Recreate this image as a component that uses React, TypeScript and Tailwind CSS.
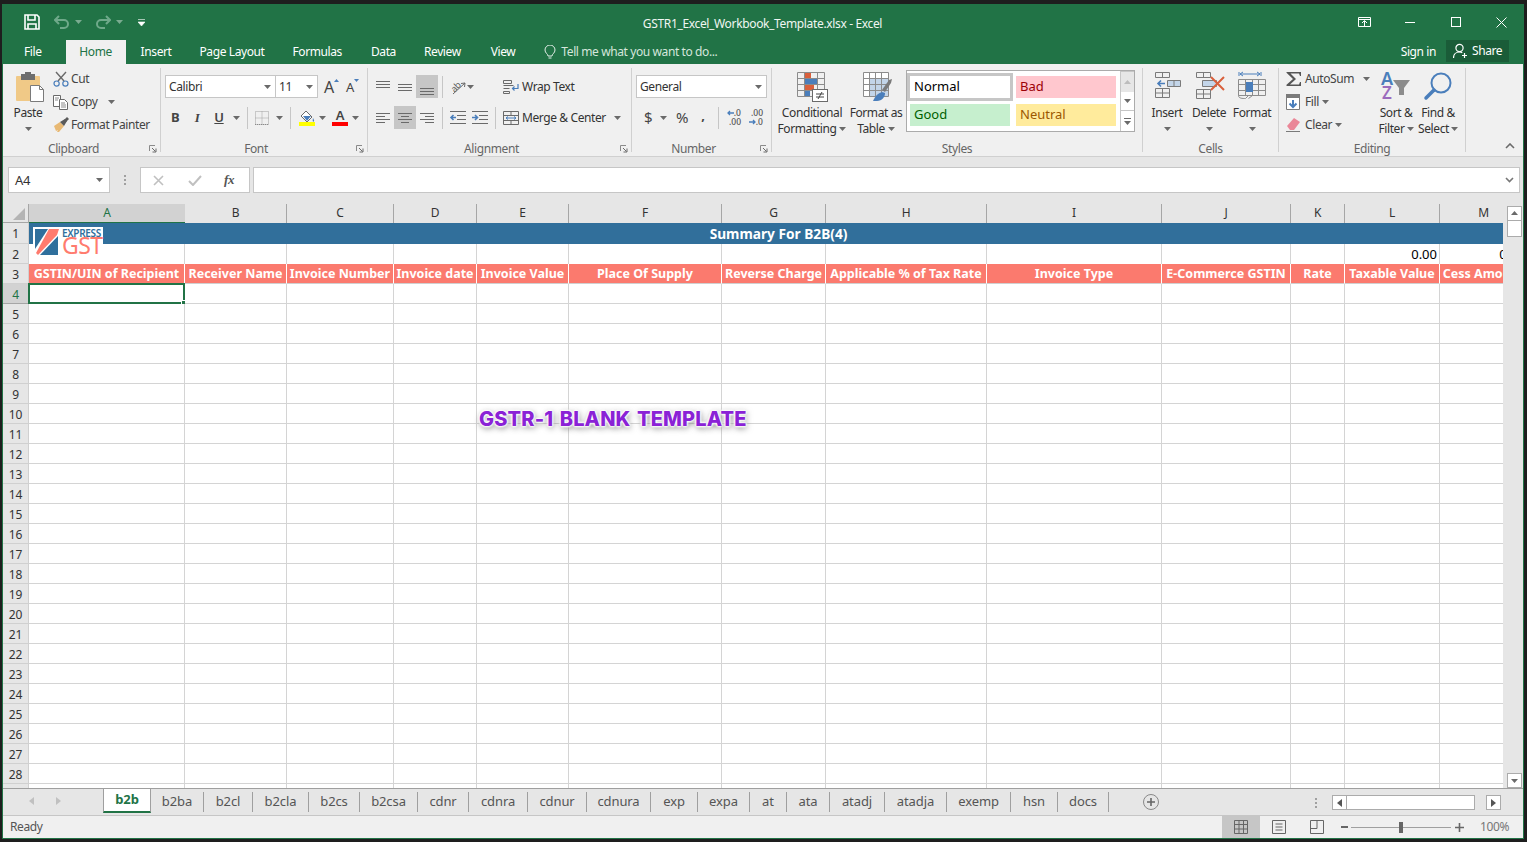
import type { ReactNode } from "react";

const colClass = "grid grid-cols-[156px_102px_107px_83px_92px_153px_104px_161px_175px_129px_54px_95px_88px] w-[1499px] shrink-0";
const cols = ["A", "B", "C", "D", "E", "F", "G", "H", "I", "J", "K", "L", "M"];
const headers = [
  "GSTIN/UIN of Recipient", "Receiver Name", "Invoice Number", "Invoice date", "Invoice Value", "Place Of Supply",
  "Reverse Charge", "Applicable % of Tax Rate", "Invoice Type", "E-Commerce GSTIN", "Rate", "Taxable Value", "Cess Amount",
];
const tabs = [
  { n: "b2ba", w: "w-[53px]" }, { n: "b2cl", w: "w-[49px]" }, { n: "b2cla", w: "w-[56px]" }, { n: "b2cs", w: "w-[51px]" },
  { n: "b2csa", w: "w-[58px]" }, { n: "cdnr", w: "w-[51px]" }, { n: "cdnra", w: "w-[59px]" }, { n: "cdnur", w: "w-[59px]" },
  { n: "cdnura", w: "w-[64px]" }, { n: "exp", w: "w-[47px]" }, { n: "expa", w: "w-[52px]" }, { n: "at", w: "w-[37px]" },
  { n: "ata", w: "w-[43px]" }, { n: "atadj", w: "w-[55px]" }, { n: "atadja", w: "w-[62px]" }, { n: "exemp", w: "w-[64px]" },
  { n: "hsn", w: "w-[47px]" }, { n: "docs", w: "w-[51px]" },
];
const rows = Array.from({ length: 29 }, (_, i) => i + 1);

const BLUE = "#4a7ebb";

function Svg({ w, h, children }: { w: number; h: number; children: ReactNode }) {
  return <svg width={w} height={h} viewBox={`0 0 ${w} ${h}`} className="block shrink-0 overflow-visible">{children}</svg>;
}

function Caret({ color = "#6a6a6a" }: { color?: string }) {
  return <svg width="7" height="4" viewBox="0 0 7 4" className="block shrink-0"><path d="M0 0h7L3.5 4z" fill={color} /></svg>;
}

function Launcher() {
  return (
    <svg width="8" height="8" viewBox="0 0 8 8" className="block shrink-0">
      <path d="M.5 6V.5H6" fill="none" stroke="#8a8a8a" />
      <path d="M3 3l3.5 3.5M7 3.5V7H3.5" fill="none" stroke="#6a6a6a" />
    </svg>
  );
}

function Group({ w, label, launcher, children }: { w: string; label: string; launcher?: boolean; children: ReactNode }) {
  return (
    <div className={`${w} h-[84px] border-r border-[#d0d0d0] flex flex-col shrink-0`}>
      <div className="h-[72px] flex">{children}</div>
      <div className={`h-[12px] flex items-center justify-center relative text-[#666] leading-[16px] pt-[6px] ${launcher ? "pr-[16px]" : ""}`}>
        {label}
        {launcher && <span className="absolute right-[3px] top-[5px]"><Launcher /></span>}
      </div>
    </div>
  );
}

function Combo({ w, text, ml }: { w: string; text: string; ml?: string }) {
  return (
    <div className={`${w} ${ml ?? ""} h-[23px] bg-white border border-[#c6c6c6] flex items-center justify-between pl-[3px] pr-[4px] text-[#333]`}>
      <span>{text}</span>
      <Caret />
    </div>
  );
}

function Sep({ ml, h = "h-[22px]" }: { ml: string; h?: string }) {
  return <div className={`${ml} ${h} w-px bg-[#c6c6c6] shrink-0`} />;
}

function Lines({ spec }: { spec: number[][] }) {
  return (
    <Svg w={16} h={16}>
      {spec.map(([y, a, b]) => <rect key={y} x={a} y={y} width={b - a} height="1" fill="#6a6a6a" />)}
    </Svg>
  );
}

function AlignBtn({ active, spec }: { active?: boolean; spec: number[][] }) {
  return (
    <div className={`w-[22px] h-[23px] flex items-center justify-center shrink-0 ${active ? "bg-[#c6c6c6]" : ""}`}>
      <Lines spec={spec} />
    </div>
  );
}

function Paste() {
  return (
    <Svg w={30} h={30}>
      <rect x="1" y="4" width="24" height="25" rx="1" fill="#f0c987" />
      <rect x="6" y="2" width="14" height="6" fill="#6d6d6d" />
      <rect x="10" y="0" width="6" height="4" fill="#6d6d6d" />
      <path d="M15.5 13.5h9l4 4v12h-13z" fill="#fff" stroke="#7a7a7a" />
      <path d="M24.5 13.5v4h4" fill="none" stroke="#7a7a7a" />
    </Svg>
  );
}

function Cut() {
  return (
    <Svg w={16} h={16}>
      <path d="M3 1l8 9M13 1l-8 9" stroke="#6a6a6a" strokeWidth="1.4" fill="none" />
      <circle cx="3.6" cy="12.6" r="2.6" fill="none" stroke={BLUE} strokeWidth="1.2" />
      <circle cx="12.4" cy="12.6" r="2.6" fill="none" stroke={BLUE} strokeWidth="1.2" />
    </Svg>
  );
}

function Copy() {
  return (
    <Svg w={16} h={16}>
      <path d="M.5 1.5h7v11h-7z" fill="#fff" stroke="#6a6a6a" />
      <path d="M6.5 5.5h5l3 3v7h-8z" fill="#fff" stroke="#6a6a6a" />
      <path d="M2 4h4M2 6h3M8 9h4M8 11h5M8 13h5" stroke="#8a8a8a" />
    </Svg>
  );
}

function Brush() {
  return (
    <Svg w={16} h={16}>
      <path d="M1 9l6-4 4 4-5 6H4l1-2-2 1z" fill="#e8b974" />
      <path d="M7 5l5-3 2 2-3 5z" fill="#5a5a5a" />
      <path d="M11 3l3-3 2 2-3 3z" fill="#5a5a5a" />
    </Svg>
  );
}

function BorderIc() {
  return (
    <Svg w={14} h={14}>
      <path d="M.5.5h13v13H.5zM7 .5v13M.5 7h13" fill="none" stroke="#a0a0a0" strokeDasharray="1 1" />
      <path d="M0 13.5h14" stroke="#8a8a8a" strokeDasharray="1 1" />
    </Svg>
  );
}

function FillIc() {
  return (
    <Svg w={16} h={16}>
      <path d="M7 1l6 6-5 5-6-6z" fill="#fff" stroke="#6a6a6a" />
      <path d="M4 6h8l-4 5z" fill={BLUE} />
      <path d="M14 8c1 2 1.6 3 .8 3.6-.8.4-1.6-.4-.8-3.6z" fill={BLUE} />
      <rect x="0" y="12" width="16" height="4" fill="#ffff00" />
    </Svg>
  );
}

function Orient() {
  return (
    <Svg w={16} h={16}>
      <text x="1" y="11" fontSize="9" fill="#5a5a5a" transform="rotate(-45 6 8)" fontFamily="Noto Sans, sans-serif">ab</text>
      <path d="M3 15L15 4" stroke="#6a6a6a" fill="none" />
      <path d="M15 4l-4 .5M15 4l-.5 4" stroke="#6a6a6a" fill="none" />
    </Svg>
  );
}

function Wrap() {
  return (
    <Svg w={16} h={16}>
      <path d="M.5 1.5h8v3h-8zM.5 6.5h10M.5 9.5h6M.5 12.5h6v2h-6z" fill="none" stroke="#6a6a6a" />
      <path d="M15 5v4.5H9.5M11.5 7.5l-2 2 2 2" fill="none" stroke={BLUE} strokeWidth="1.2" />
    </Svg>
  );
}

function Merge() {
  return (
    <Svg w={16} h={16}>
      <path d="M.5 1.5h15v13H.5zM.5 5.5h15M.5 10.5h15M8 1.5v4M8 10.5v4" fill="none" stroke="#6a6a6a" />
      <path d="M3 8h10M5 6.5L3 8l2 1.5M11 6.5L13 8l-2 1.5" fill="none" stroke={BLUE} />
    </Svg>
  );
}

function Indent({ flip }: { flip?: boolean }) {
  return (
    <Svg w={16} h={14}>
      <path d="M0 .5h16M7 4.5h9M7 8.5h9M0 12.5h16" stroke="#6a6a6a" />
      {flip
        ? <path d="M0 6.5h5M3 4l2.5 2.5L3 9" fill="none" stroke={BLUE} strokeWidth="1.6" />
        : <path d="M6 6.5H1M3.5 4L1 6.5 3.5 9" fill="none" stroke={BLUE} strokeWidth="1.6" />}
    </Svg>
  );
}

function MiniArrow({ right }: { right?: boolean }) {
  return (
    <svg width="7" height="6" viewBox="0 0 7 6" className="block shrink-0">
      <path d={right ? "M0 3h6M4 1l2 2-2 2" : "M7 3H1M3 1L1 3l2 2"} fill="none" stroke={BLUE} strokeWidth="1.3" />
    </svg>
  );
}

function Decimal({ more }: { more?: boolean }) {
  return (
    <div className="w-[16px] h-[17px] flex flex-col text-[8.5px] leading-[8.5px] font-medium tracking-normal text-[#555] items-end">
      {more ? <span>.00</span> : <span className="flex items-center"><MiniArrow />.0</span>}
      {more ? <span className="flex items-center"><MiniArrow right />.0</span> : <span>.00</span>}
    </div>
  );
}

function CondFmt() {
  return (
    <Svg w={31} h={30}>
      <path d="M.5.5h27v24H.5zM.5 6.5h27M.5 12.5h27M.5 18.5h27M7.5.5v24M20.5.5v24" fill="none" stroke="#8c8c8c" />
      <rect x="8" y="1" width="6" height="5" fill="#d9603c" />
      <rect x="8" y="7" width="12" height="5" fill={BLUE} />
      <rect x="8" y="13" width="9" height="5" fill="#d9603c" />
      <rect x="8" y="19" width="5" height="5" fill={BLUE} />
      <rect x="15.5" y="17.5" width="15" height="12" fill="#fff" stroke="#6a6a6a" />
      <path d="M19 22h8M19 25h8M25 20l-4 7" stroke="#444" fill="none" />
    </Svg>
  );
}

function TableFmt() {
  return (
    <Svg w={30} h={30}>
      <rect x="1" y="1" width="24" height="24" fill="#fff" />
      <rect x="7" y="7" width="18" height="18" fill="#c3d5e9" />
      <path d="M.5.5h25v24H.5zM.5 6.5h25M.5 12.5h25M.5 18.5h25M6.5.5v24M12.5.5v24M18.5.5v24" fill="none" stroke="#8c8c8c" />
      <path d="M19 18l7-10 3-1-1 4-6 9z" fill="#7a7a7a" />
      <path d="M10 29c2-5 5-8 9-9l3 1c0 4-3 8-8 8z" fill={BLUE} />
    </Svg>
  );
}

function InsertIc() {
  return (
    <Svg w={26} h={26}>
      <path d="M.5.5h14v5H.5zM7.5.5v5M.5 16.5h14v9H.5zM.5 21h14M7.5 16.5v9" fill="none" stroke="#7a7a7a" />
      <path d="M12.500 8.500h13v6h-13z" fill="#c3d5e9" stroke="#7a7a7a" />
      <path d="M19 8.500v6" stroke="#7a7a7a" />
      <path d="M10 11.500H3M6 8.500l-3 3 3 3" fill="none" stroke={BLUE} strokeWidth="1.6" />
    </Svg>
  );
}

function DeleteIc() {
  return (
    <Svg w={29} h={27}>
      <path d="M.5.5h14v5H.5zM7.5.5v5M.5 17.500h14v9H.5zM.5 22h14M7.5 17.500v9" fill="none" stroke="#7a7a7a" />
      <path d="M6.500 8.500h14v6h-14z" fill="#c3d5e9" stroke="#7a7a7a" />
      <path d="M15 5l13 13M28 5L15 18" stroke="#d9603c" strokeWidth="2" fill="none" />
    </Svg>
  );
}

function FormatIc() {
  return (
    <Svg w={28} h={30}>
      <path d="M1 1v4M23 1v4M2 3h20M2 3l3-2M2 3l3 2M22 3l-3-2M22 3l-3 2" stroke={BLUE} fill="none" />
      <path d="M.5 8.500h27v16H.5zM.5 13.500h27M.5 19.500h27M7.500 8.500v16M14.500 8.500v16M20.500 8.500v16" fill="none" stroke="#8c8c8c" />
      <rect x="8" y="11" width="7" height="10" fill={BLUE} />
      <path d="M.5 24.500c0 3 4 3 7 3l3-3M10.500 27.500l4-3" fill="none" stroke="#8c8c8c" />
    </Svg>
  );
}

function SumIc() {
  return (
    <Svg w={16} h={16}>
      <path d="M.5 1h14.500v4h-1l-1-2.500H4.500L10 8l-6 5.500h9l1-2.500h1v4H.5v-1.200L7 8 .5 1.800z" fill="#555" />
    </Svg>
  );
}

function FillDown() {
  return (
    <Svg w={14} h={16}>
      <path d="M.5.5h13v15H.5z" fill="#fff" stroke="#7a7a7a" />
      <rect x="0" y="0" width="14" height="4" fill="#7a7a7a" />
      <path d="M7 6v7M3.500 9.500L7 13l3.500-3.500" fill="none" stroke={BLUE} strokeWidth="2" />
    </Svg>
  );
}

function Eraser() {
  return (
    <Svg w={15} h={15}>
      <path d="M1 9l7-8 6 4-6 8H4z" fill="#ea8798" />
      <path d="M0 14.500h14" stroke="#7a7a7a" />
    </Svg>
  );
}

function SortIc() {
  return (
    <Svg w={30} h={28}>
      <text x="0" y="13" fontSize="18" fontWeight="600" fill={BLUE} fontFamily="Noto Sans, sans-serif">A</text>
      <text x="1" y="27" fontSize="17" fontWeight="600" fill="#9b6bbd" fontFamily="Noto Sans, sans-serif">Z</text>
      <path d="M12 8h17l-6 8v7h-5v-7z" fill="#8c8c8c" />
    </Svg>
  );
}

function FindIc() {
  return (
    <Svg w={28} h={28}>
      <circle cx="17" cy="11" r="9.500" fill="none" stroke={BLUE} strokeWidth="2" />
      <path d="M10 18l-8 8" stroke={BLUE} strokeWidth="3.500" strokeLinecap="round" />
    </Svg>
  );
}

function Logo() {
  return (
    <div className="absolute left-[30px] top-[23px] w-[70px] h-[29px] bg-white flex pl-[2px] pt-[2px] gap-[3px]">
      <Svg w={24} h={26}>
        <path d="M0 0h13L0 20z" fill="#2f6f9c" />
        <path d="M14 0h10l-2 6L3 26l-2-2z" fill="#ff7b6e" />
        <path d="M23 7v19H5z" fill="#2f6f9c" />
      </Svg>
      <div className="flex flex-col w-[42px]">
        <span className="text-[10px] leading-[9px] font-semibold text-[#2f6f9c] tracking-[-0.3px]">EXPRESS</span>
        <span className="text-[23px] leading-[15px] text-[#ff7b6e] tracking-[-0.5px]">GST</span>
      </div>
    </div>
  );
}

export default function App() {
  return (
    <div className="w-[1527px] h-[842px] bg-[#1e1e1e] pt-[4px] pl-[2px] overflow-hidden text-[12px] text-[#444] tracking-[-0.4px] [font-family:'Noto_Sans','Liberation_Sans',sans-serif]">
      <div className="w-[1522px] h-[835px] border-x border-b border-[#217346] flex flex-col">
        {/* title bar */}
        <div className="h-[36px] bg-[#217346] flex items-center text-white shrink-0">
          <div className="flex items-center pl-[21px] w-[150px]">
            <svg width="16" height="16" viewBox="0 0 16 16"><path d="M1 1h12l2 2v12H1zM4 1v5h7V1M4 15v-5h8v5" fill="none" stroke="#fff" strokeWidth="1.6" /></svg>
            <svg width="16" height="14" viewBox="0 0 16 14" className="ml-[14px]"><path d="M1 5h9a4 4 0 0 1 0 8H6M5 1L1 5l4 4" fill="none" stroke="#6fa98a" strokeWidth="2" /></svg>
            <span className="ml-[5px] opacity-40"><Caret color="#fff" /></span>
            <svg width="16" height="14" viewBox="0 0 16 14" className="ml-[13px]"><path d="M15 5H6a4 4 0 0 0 0 8h4M11 1l4 4-4 4" fill="none" stroke="#6fa98a" strokeWidth="2" /></svg>
            <span className="ml-[5px] opacity-40"><Caret color="#fff" /></span>
            <svg width="7" height="7" viewBox="0 0 7 7" className="ml-[15px]"><path d="M0 .5h7M0 3h7L3.500 7z" fill="#fff" stroke="#fff" strokeWidth=".6" /></svg>
          </div>
          <div className="flex-1 text-center text-[#f0f6f2] pt-[3px] pl-[14px] tracking-[-0.35px]">GSTR1_Excel_Workbook_Template.xlsx - Excel</div>
          <div className="flex items-center pr-[16px]">
            <svg width="13" height="11" viewBox="0 0 13 11"><path d="M.5 .5h12v9H.5zM.5 2.500h12M6.500 9V4M4 6l2.500-2.500L9 6" fill="none" stroke="#fff" /></svg>
            <div className="w-[10px] h-px bg-white ml-[34px]" />
            <div className="w-[10px] h-[10px] border border-white ml-[36px]" />
            <svg width="11" height="11" viewBox="0 0 11 11" className="ml-[35px]"><path d="M.5.5l10 10M10.500.5l-10 10" stroke="#fff" /></svg>
          </div>
        </div>

        {/* tabs */}
        <div className="h-[24px] bg-[#217346] flex items-center text-white shrink-0">
          <span className="ml-[21px]">File</span>
          <span className="ml-[24px] w-[60px] h-[24px] bg-[#f0f0f0] text-[#217346] flex items-center justify-center">Home</span>
          <span className="ml-[15px]">Insert</span>
          <span className="ml-[28px]">Page Layout</span>
          <span className="ml-[28px]">Formulas</span>
          <span className="ml-[29px]">Data</span>
          <span className="ml-[28px]">Review</span>
          <span className="ml-[30px]">View</span>
          <svg width="12" height="15" viewBox="0 0 12 15" className="ml-[29px]"><path d="M4 11c0-2-3-3-3-6a5 5 0 0 1 10 0c0 3-3 4-3 6zM4.500 13h3" fill="none" stroke="#e4efe9" /></svg>
          <span className="ml-[5px] text-[#d5e6dc]">Tell me what you want to do...</span>
          <span className="ml-auto">Sign in</span>
          <div className="ml-[10px] mr-[14px] w-[63px] h-[22px] mb-[2px] bg-[#1a5c38] flex items-center pl-[7px] gap-[4px]">
            <svg width="15" height="16" viewBox="0 0 15 16"><circle cx="6.500" cy="5" r="3.600" fill="none" stroke="#fff" strokeWidth="1.2" /><path d="M.5 15c0-3.500 2.500-6 6-6 1 0 2 .2 2.800.7M11.500 10v5M9 12.500h5" fill="none" stroke="#fff" strokeWidth="1.2" /></svg>
            <span>Share</span>
          </div>
        </div>

        {/* ribbon */}
        <div className="h-[93px] bg-[#f0f0f0] border-b border-[#d0d0d0] flex pt-[4px] shrink-0">
          <Group w="w-[158px]" label="Clipboard" launcher>
            <div className="ml-[5px] w-[40px] flex flex-col items-center pt-[4px]">
              <span className="ml-[4px]"><Paste /></span>
              <span className="mt-[3px] leading-[16px] text-[#333]">Paste</span>
              <span className="mt-[6px]"><Caret /></span>
            </div>
            <div className="ml-[5px] -mt-[1px] flex flex-col">
              <div className="h-[23px] flex items-center gap-[1px]"><Cut /><span className="ml-[1px]">Cut</span></div>
              <div className="h-[23px] flex items-center gap-[1px]"><Copy /><span className="ml-[1px]">Copy</span><span className="ml-[9px]"><Caret /></span></div>
              <div className="h-[23px] flex items-center gap-[1px]"><Brush /><span className="ml-[1px]">Format Painter</span></div>
            </div>
          </Group>

          <Group w="w-[207px]" label="Font" launcher>
            <div className="flex flex-col pt-[7px] w-full">
              <div className="flex items-center">
                <Combo w="w-[111px]" ml="ml-[4px]" text="Calibri" />
                <Combo w="w-[43px]" ml="-ml-px" text="11" />
                <div className="ml-[6px] w-[17px] flex items-start text-[16px] leading-[18px]">A<svg width="5" height="3" viewBox="0 0 5 3" className="mt-[1px]"><path d="M0 3h5L2.500 0z" fill={BLUE} /></svg></div>
                <div className="ml-[5px] w-[17px] flex items-start text-[13px] leading-[18px]">A<svg width="5" height="3" viewBox="0 0 5 3" className="mt-[1px]"><path d="M0 0h5L2.500 3z" fill={BLUE} /></svg></div>
              </div>
              <div className="flex items-center h-[23px] mt-[8px] pl-[3px] text-[13px]">
                <span className="w-[22px] text-center font-bold">B</span>
                <span className="w-[22px] text-center italic font-semibold [font-family:'Liberation_Serif',serif]">I</span>
                <span className="w-[22px] text-center underline font-semibold">U</span>
                <span className="w-[12px] flex justify-center"><Caret /></span>
                <Sep ml="ml-[5px]" />
                <span className="w-[28px] flex justify-center"><BorderIc /></span>
                <span className="w-[7px] flex justify-center"><Caret /></span>
                <Sep ml="ml-[7px]" />
                <span className="ml-[8px]"><FillIc /></span>
                <span className="w-[14px] flex justify-center"><Caret /></span>
                <span className="ml-[3px] w-[16px] flex flex-col items-center leading-[13px] font-semibold">A<span className="w-[16px] h-[4px] bg-[#ff0000]" /></span>
                <span className="w-[14px] flex justify-center"><Caret /></span>
              </div>
            </div>
          </Group>

          <Group w="w-[264px]" label="Alignment" launcher>
            <div className="flex flex-col pt-[7px] pl-[4px] w-full">
              <div className="flex items-center h-[23px]">
                <AlignBtn spec={[[2, 1, 15], [5, 1, 15], [8, 1, 15]]} />
                <AlignBtn spec={[[5, 1, 15], [8, 1, 15], [11, 1, 15]]} />
                <AlignBtn active spec={[[9, 1, 15], [12, 1, 15], [15, 1, 15]]} />
                <Sep ml="ml-[4px]" />
                <span className="ml-[7px]"><Orient /></span>
                <span className="ml-[1px] w-[7px]"><Caret /></span>
                <span className="ml-[29px]"><Wrap /></span>
                <span className="ml-[3px] text-[#333]">Wrap Text</span>
              </div>
              <div className="flex items-center h-[23px] mt-[8px]">
                <AlignBtn spec={[[3, 1, 15], [6, 1, 10], [9, 1, 15], [12, 1, 10]]} />
                <AlignBtn active spec={[[3, 1, 15], [6, 4, 12], [9, 1, 15], [12, 4, 12]]} />
                <AlignBtn spec={[[3, 1, 15], [6, 6, 15], [9, 1, 15], [12, 6, 15]]} />
                <Sep ml="ml-[4px]" />
                <span className="ml-[7px]"><Indent /></span>
                <span className="ml-[6px]"><Indent flip /></span>
                <Sep ml="ml-[7px]" />
                <span className="ml-[7px]"><Merge /></span>
                <span className="ml-[3px] text-[#333]">Merge &amp; Center</span>
                <span className="ml-[8px]"><Caret /></span>
              </div>
            </div>
          </Group>

          <Group w="w-[140px]" label="Number" launcher>
            <div className="flex flex-col pt-[7px] pl-[4px] w-full">
              <Combo w="w-[131px]" text="General" />
              <div className="flex items-center h-[23px] mt-[8px]">
                <span className="w-[24px] text-center text-[15px]">$</span>
                <span className="w-[6px] flex justify-center"><Caret /></span>
                <span className="ml-[3px] w-[26px] text-center text-[15px]">%</span>
                <span className="w-[16px] text-center font-bold text-[13px] leading-[14px] -mt-[6px]">,</span>
                <Sep ml="ml-[7px]" />
                <span className="ml-[6px]"><Decimal /></span>
                <span className="ml-[6px]"><Decimal more /></span>
              </div>
            </div>
          </Group>

          <Group w="w-[371px]" label="Styles">
            <div className="ml-[4px] w-[72px] flex flex-col items-center pt-[4px]">
              <CondFmt />
              <span className="mt-[3px] leading-[16px] text-[#333]">Conditional</span>
              <span className="leading-[16px] text-[#333] flex items-center gap-[3px]">Formatting <Caret /></span>
            </div>
            <div className="w-[56px] flex flex-col items-center pt-[4px]">
              <span className="ml-[4px]"><TableFmt /></span>
              <span className="mt-[3px] leading-[16px] text-[#333]">Format as</span>
              <span className="leading-[16px] text-[#333] flex items-center gap-[3px]">Table <Caret /></span>
            </div>
            <div className="ml-[2px] mt-[2px] h-[62px] w-[229px] bg-white border border-[#ababab] flex text-[13px] tracking-normal">
              <div className="grid grid-cols-[100px_100px] grid-rows-[22px_22px] gap-x-[6px] gap-y-[6px] pl-[3px] pt-[5px]">
                <div className="flex items-center pl-[4px] text-black ring-3 ring-[#c6c6c6]">Normal</div>
                <div className="flex items-center pl-[4px] bg-[#ffc7ce] text-[#9c0006]">Bad</div>
                <div className="flex items-center pl-[4px] bg-[#c6efce] text-[#006100]">Good</div>
                <div className="flex items-center pl-[4px] bg-[#ffeb9c] text-[#9c5700]">Neutral</div>
              </div>
              <div className="ml-auto w-[14px] flex flex-col border-l border-[#c6c6c6]">
                <div className="h-[21px] bg-[#e6e6e6] flex items-center justify-center border-b border-[#c6c6c6] rotate-180"><Caret color="#bcbcbc" /></div>
                <div className="h-[19px] flex items-center justify-center border-b border-[#c6c6c6]"><Caret /></div>
                <div className="flex-1 flex flex-col items-center justify-center gap-[2px]"><div className="w-[7px] h-px bg-[#6a6a6a]" /><Caret /></div>
              </div>
            </div>
          </Group>

          <Group w="w-[136px]" label="Cells">
            <div className="ml-[3px] w-[42px] flex flex-col items-center pt-[4px]">
              <span className="ml-[2px]"><InsertIc /></span>
              <span className="mt-[7px] leading-[16px] text-[#333]">Insert</span>
              <span className="mt-[6px]"><Caret /></span>
            </div>
            <div className="w-[42px] flex flex-col items-center pt-[4px]">
              <span className="ml-[3px]"><DeleteIc /></span>
              <span className="mt-[6px] leading-[16px] text-[#333]">Delete</span>
              <span className="mt-[6px]"><Caret /></span>
            </div>
            <div className="w-[44px] flex flex-col items-center pt-[3px]">
              <FormatIc />
              <span className="mt-[4px] leading-[16px] text-[#333]">Format</span>
              <span className="mt-[6px]"><Caret /></span>
            </div>
          </Group>

          <Group w="w-[187px]" label="Editing">
            <div className="ml-[7px] w-[90px] -mt-[1px] flex flex-col">
              <div className="h-[23px] flex items-center"><SumIc /><span className="ml-[3px]">AutoSum</span><span className="ml-[9px]"><Caret /></span></div>
              <div className="h-[23px] flex items-center"><FillDown /><span className="ml-[5px]">Fill</span><span className="ml-[3px]"><Caret /></span></div>
              <div className="h-[23px] flex items-center"><Eraser /><span className="ml-[4px]">Clear</span><span className="ml-[3px]"><Caret /></span></div>
            </div>
            <div className="w-[40px] flex flex-col items-center pt-[4px]">
              <SortIc />
              <span className="mt-[5px] leading-[16px] text-[#333]">Sort &amp;</span>
              <span className="leading-[16px] text-[#333] flex items-center gap-[2px]">Filter <Caret /></span>
            </div>
            <div className="w-[44px] flex flex-col items-center pt-[4px]">
              <FindIc />
              <span className="mt-[5px] leading-[16px] text-[#333]">Find &amp;</span>
              <span className="leading-[16px] text-[#333] flex items-center gap-[2px]">Select <Caret /></span>
            </div>
          </Group>

          <div className="flex-1 flex justify-end items-end pr-[8px] pb-[7px]">
            <svg width="10" height="6" viewBox="0 0 10 6"><path d="M1 5l4-4 4 4" fill="none" stroke="#6a6a6a" strokeWidth="1.6" /></svg>
          </div>
        </div>

        {/* formula bar */}
        <div className="h-[47px] bg-[#e6e6e6] flex items-center pl-[5px] pr-[3px] pb-[1px] shrink-0">
          <div className="w-[102px] h-[26px] bg-white border border-[#c6c6c6] flex items-center justify-between pl-[6px] pr-[6px] text-[13px] text-[#333]">
            <span className="pt-[1px]">A4</span>
            <Caret />
          </div>
          <div className="ml-[14px] w-[2px] flex flex-col gap-[2px]">
            <div className="h-[2px] bg-[#a0a0a0]" /><div className="h-[2px] bg-[#a0a0a0]" /><div className="h-[2px] bg-[#a0a0a0]" />
          </div>
          <div className="ml-[14px] w-[110px] h-[26px] bg-white border border-[#c6c6c6] flex items-center pl-[12px]">
            <svg width="11" height="11" viewBox="0 0 11 11"><path d="M1 1l9 9M10 1l-9 9" stroke="#c0c0c0" strokeWidth="1.6" /></svg>
            <svg width="14" height="11" viewBox="0 0 14 11" className="ml-[24px]"><path d="M1 6l4 4 8-9" fill="none" stroke="#c0c0c0" strokeWidth="2" /></svg>
            <span className="ml-[22px] italic font-semibold text-[13px] text-[#555] [font-family:'Liberation_Serif',serif]">fx</span>
          </div>
          <div className="ml-[3px] flex-1 h-[26px] bg-white border border-[#c6c6c6] flex items-center justify-end pr-[5px]">
            <svg width="9" height="6" viewBox="0 0 9 6"><path d="M1 1l3.500 3.500L8 1" fill="none" stroke="#777" strokeWidth="1.6" /></svg>
          </div>
        </div>

        {/* sheet */}
        <div className="h-[584px] flex shrink-0">
          <div className="w-[1500px] h-full bg-white overflow-hidden relative text-[#333] tracking-[-0.2px]">
            <div className="flex h-[19px] bg-[#e6e6e6] w-[1525px]">
              <div className="w-[26px] shrink-0 border-r border-b border-[#a6a6a6] flex items-end justify-end pr-[3px] pb-[2px]">
                <svg width="12" height="12" viewBox="0 0 12 12"><path d="M12 0v12H0z" fill="#b4b4b4" /></svg>
              </div>
              <div className={colClass}>
                {cols.map((c) => (
                  <div key={c} className={c === "A" ? "bg-[#d2d2d2] text-[#217346] border-b-2 border-[#217346] flex items-center justify-center" : "border-r border-b border-[#a6a6a6] flex items-center justify-center pb-[1px]"}>{c}</div>
                ))}
              </div>
            </div>

            {rows.map((r) => (
              <div key={r} className={`flex w-[1525px] ${r === 1 ? "h-[21px]" : "h-[20px]"}`}>
                <div className={`w-[26px] shrink-0 border-r border-b flex items-center justify-center pt-[2px] ${r === 4 ? "bg-[#d2d2d2] text-[#217346] border-[#a6a6a6]" : "bg-[#e6e6e6] border-[#d0d0d0]"}`}>{r < 29 ? r : ""}</div>
                {r === 1 ? (
                  <div className="w-[1474px] shrink-0 bg-[#316f9b] text-white font-bold text-[13.7px] tracking-normal flex items-center justify-center pl-[25px] pt-[1px]">Summary For B2B(4)</div>
                ) : (
                  <div className={colClass}>
                    {cols.map((c, i) => {
                      if (r === 3) {
                        return <div key={c} className="bg-[#fb7a6e] border-r border-white border-b-[#d0d0d0] border-b text-white font-bold text-[12.5px] tracking-normal flex items-center justify-center whitespace-nowrap overflow-hidden pt-[2px]">{headers[i]}</div>;
                      }
                      if (r === 2) {
                        return <div key={c} className="border-r border-[#d4d4d4] text-black text-[13px] tracking-normal flex items-center justify-end pr-[2px] pt-[1px]">{c === "L" || c === "M" ? "0.00" : ""}</div>;
                      }
                      return (
                        <div key={c} className="border-r border-b border-[#d4d4d4] relative">
                          {r === 4 && c === "A" && (
                            <div className="absolute -left-px -top-px w-[157px] h-[21px] border-2 border-[#217346]">
                              <div className="absolute -right-[3px] -bottom-[3px] w-[5px] h-[5px] bg-[#217346] border border-white" />
                            </div>
                          )}
                        </div>
                      );
                    })}
                  </div>
                )}
              </div>
            ))}

            <Logo />
            <div className="absolute left-[476px] top-[202px] text-[20px] leading-[26px] font-extrabold tracking-[0.15px] [word-spacing:2px] text-[#8a22d6] whitespace-nowrap [font-family:'Inter',sans-serif] [text-shadow:0_0_2px_#fff,0_0_2px_#fff,0_0_3px_#fff,0_0_3px_#fff,0_0_3px_#fff,1px_2px_6px_#666]">GSTR-1 BLANK TEMPLATE</div>
          </div>

          <div className="w-[20px] h-full bg-[#e6e6e6] flex flex-col items-end pr-[1px] pt-[2px]">
            <div className="w-[15px] h-[15px] bg-white border border-[#ababab] flex items-center justify-center rotate-180"><Caret /></div>
            <div className="w-[15px] h-[16px] bg-white border border-[#ababab] border-t-0" />
            <div className="mt-auto w-[15px] h-[15px] bg-white border border-[#ababab] flex items-center justify-center"><Caret /></div>
          </div>
        </div>

        {/* sheet tabs */}
        <div className="h-[28px] bg-[#e6e6e6] border-y border-t-[#9f9f9f] border-b-[#c6c6c6] flex items-start shrink-0 text-[13px] tracking-[-0.1px] text-[#555]">
          <div className="w-[100px] h-[24px] flex items-center pl-[26px] gap-[22px]">
            <svg width="5" height="8" viewBox="0 0 5 8"><path d="M5 0v8L0 4z" fill="#c0c0c0" /></svg>
            <svg width="5" height="8" viewBox="0 0 5 8"><path d="M0 0v8l5-4z" fill="#c0c0c0" /></svg>
          </div>
          <div className="w-[48px] h-[24px] bg-white border-x border-[#9f9f9f] border-b-2 border-b-[#217346] text-[#217346] font-bold flex items-center justify-center">b2b</div>
          {tabs.map((t) => (
            <div key={t.n} className={`${t.w} h-[20px] mt-[3px] border-r border-[#9f9f9f] flex items-center justify-center`}>{t.n}</div>
          ))}
          <svg width="16" height="16" viewBox="0 0 16 16" className="ml-[34px] mt-[5px]"><circle cx="8" cy="8" r="7.500" fill="none" stroke="#888" /><path d="M8 4v8M4 8h8" stroke="#666" strokeWidth="1.600" /></svg>
          <div className="ml-[156px] mt-[9px] w-[2px] flex flex-col gap-[2px]">
            <div className="h-[2px] bg-[#a0a0a0]" /><div className="h-[2px] bg-[#a0a0a0]" /><div className="h-[2px] bg-[#a0a0a0]" />
          </div>
          <div className="ml-[15px] mt-[6px] w-[169px] h-[15px] flex">
            <div className="w-[15px] h-full bg-white border border-[#ababab] flex items-center justify-center"><svg width="5" height="8" viewBox="0 0 5 8"><path d="M5 0v8L0 4z" fill="#555" /></svg></div>
            <div className="w-[128px] h-full bg-white border-y border-r border-[#ababab]" />
            <div className="flex-1" />
            <div className="w-[15px] h-full bg-white border border-[#ababab] flex items-center justify-center"><svg width="5" height="8" viewBox="0 0 5 8"><path d="M0 0v8l5-4z" fill="#555" /></svg></div>
          </div>
        </div>

        {/* status bar */}
        <div className="h-[22px] bg-[#f0f0f0] flex items-center shrink-0 text-[#555]">
          <span className="ml-[7px]">Ready</span>
          <div className="ml-auto flex items-center h-full">
            <div className="w-[38px] h-full bg-[#c6c6c6] flex items-center justify-center">
              <svg width="14" height="14" viewBox="0 0 14 14"><path d="M.5.500h13v13H.5zM.5 4.500h13M.5 9h13M5 .5v13M9.500.5v13" fill="none" stroke="#666" /></svg>
            </div>
            <svg width="14" height="14" viewBox="0 0 14 14" className="ml-[12px]"><path d="M.5.500h13v13H.5z" fill="none" stroke="#666" /><path d="M3.500 4h7M3.500 7h7M3.500 10h7" stroke="#666" /></svg>
            <svg width="14" height="14" viewBox="0 0 14 14" className="ml-[24px]"><path d="M.5.500h13v13H.5zM.5 8.500h6.500V.5" fill="none" stroke="#666" /></svg>
            <div className="ml-[17px] w-[7px] h-[2px] bg-[#666]" />
            <div className="ml-[3px] w-[100px] h-px bg-[#a0a0a0] flex justify-center items-center">
              <div className="w-[4px] h-[11px] bg-[#666] shrink-0" />
            </div>
            <svg width="9" height="9" viewBox="0 0 9 9" className="ml-[4px]"><path d="M4.500 0v9M0 4.500h9" stroke="#666" strokeWidth="1.600" /></svg>
            <span className="ml-[16px] w-[30px] mr-[13px] text-[#777]">100%</span>
          </div>
        </div>
      </div>
    </div>
  );
}
